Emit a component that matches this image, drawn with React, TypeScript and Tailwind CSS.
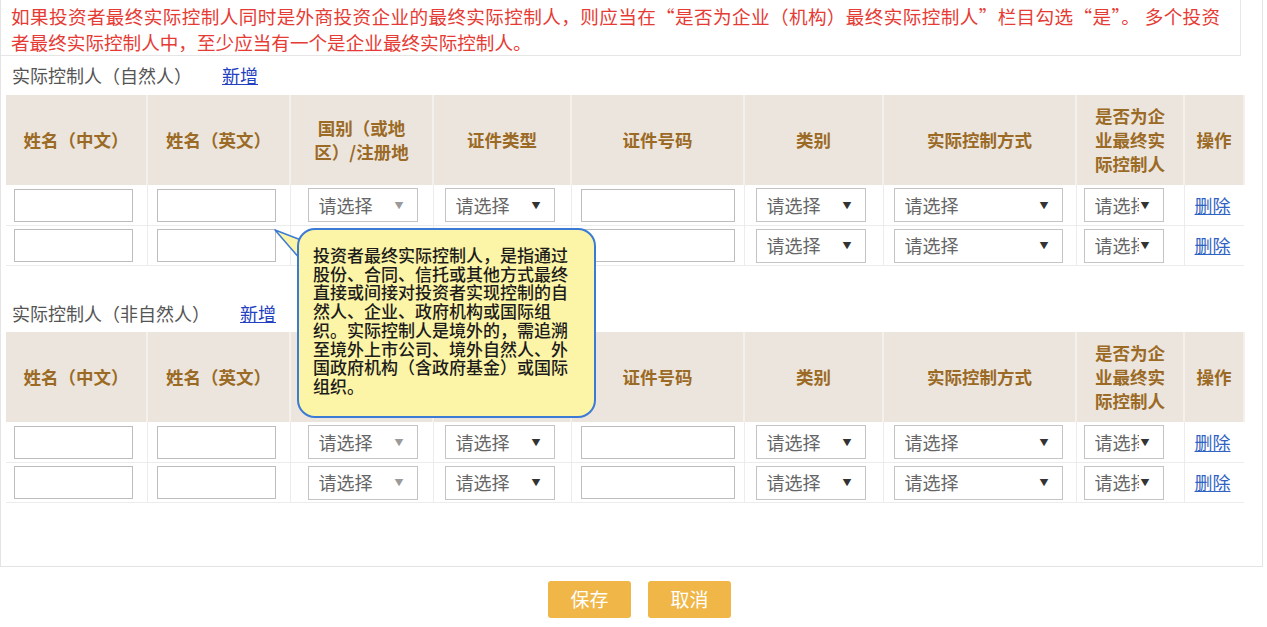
import React from "react";

const FONT = '"Noto Sans CJK SC", "Noto Sans", sans-serif';

function TextInput({ w, ml }: { w: number; ml: number }) {
  return (
    <div
      className="h-[33px] border border-[#bdbdbd] bg-white"
      style={{ width: w, marginLeft: ml }}
    />
  );
}

function Select({
  w,
  ml,
  light,
  clip,
}: {
  w: number;
  ml: number;
  light?: boolean;
  clip?: boolean;
}) {
  return (
    <div
      className="h-[34px] border border-[#c4c4c4] bg-white flex items-center pl-[10px] pr-[8px]"
      style={{ width: w, marginLeft: ml }}
    >
      <div
        className={
          "text-[18px] text-[#666] whitespace-nowrap overflow-hidden " +
          (clip ? "w-[44px] shrink-0" : "flex-1")
        }
      >
        请选择
      </div>
      <div
        className={
          "text-[9px] leading-none ml-auto " +
          (light ? "text-[#9a9a9a] mr-[5px]" : "text-[#333] mr-[5px]")
        }
      >
        ▼
      </div>
    </div>
  );
}

const COLS = [141, 143, 143, 138, 173, 139, 193, 108, 60];

function Header() {
  const th =
    "h-[90px] text-center align-middle font-bold text-[17.5px] leading-[24px] text-[#9b6a25] bg-[#ebe5de] border-r-2 border-[#f4f1ed] p-0";
  return (
    <tr>
      <th className={th}>姓名（中文）</th>
      <th className={th}>姓名（英文）</th>
      <th className={th}>
        国别（或地
        <br />
        区）/注册地
      </th>
      <th className={th}>证件类型</th>
      <th className={th}>证件号码</th>
      <th className={th}>类别</th>
      <th className={th}>实际控制方式</th>
      <th className={th}>
        是否为企
        <br />
        业最终实
        <br />
        际控制人
      </th>
      <th className={th + " border-r-0"}>操作</th>
    </tr>
  );
}

function Row({ h }: { h: number }) {
  const td = "p-0 border-b border-r border-[#ececec] align-middle";
  const inner = "flex items-center";
  return (
    <tr>
      <td className={td}>
        <div className={inner} style={{ height: h }}>
          <TextInput w={119} ml={8} />
        </div>
      </td>
      <td className={td}>
        <div className={inner} style={{ height: h }}>
          <TextInput w={119} ml={9} />
        </div>
      </td>
      <td className={td}>
        <div className={inner} style={{ height: h }}>
          <Select w={110} ml={17} light />
        </div>
      </td>
      <td className={td}>
        <div className={inner} style={{ height: h }}>
          <Select w={110} ml={11} />
        </div>
      </td>
      <td className={td}>
        <div className={inner} style={{ height: h }}>
          <TextInput w={154} ml={9} />
        </div>
      </td>
      <td className={td}>
        <div className={inner} style={{ height: h }}>
          <Select w={110} ml={11} />
        </div>
      </td>
      <td className={td}>
        <div className={inner} style={{ height: h }}>
          <Select w={169} ml={10} />
        </div>
      </td>
      <td className={td}>
        <div className={inner} style={{ height: h }}>
          <Select w={80} ml={7} clip />
        </div>
      </td>
      <td className={td + " border-r-0"}>
        <div className={inner} style={{ height: h }}>
          <a className="ml-[10px] text-[18px] text-[#2f62c2] underline cursor-pointer">
            删除
          </a>
        </div>
      </td>
    </tr>
  );
}

function Table() {
  return (
    <table className="ml-[5px] table-fixed border-collapse w-[1238px]">
      <colgroup>
        {COLS.map((c, i) => (
          <col key={i} style={{ width: c }} />
        ))}
      </colgroup>
      <thead>
        <Header />
      </thead>
      <tbody>
        <Row h={40} />
        <Row h={39} />
      </tbody>
    </table>
  );
}

export default function App() {
  return (
    <div className="w-[1267px] h-[627px] bg-white overflow-hidden" style={{ fontFamily: FONT }}>
      <div className="relative w-[1263px] h-[567px] border-r border-b border-l border-[#e4e4e4]">
        <div className="w-[1240px] h-[56px] border-r border-b border-[#e6e6e6] pl-[10px] pt-[3px] text-[18.6px] leading-[26px] text-[#e63b35] whitespace-nowrap">
          <div className="tracking-[0.38px]">
            如果投资者最终实际控制人同时是外商投资企业的最终实际控制人，则应当在“是否为企业（机构）最终实际控制人”栏目勾选“是”。 多个投资
          </div>
          <div>者最终实际控制人中，至少应当有一个是企业最终实际控制人。</div>
        </div>

        <div className="h-[39px] flex items-center pl-[11px] text-[18px] text-[#555]">
          <span>实际控制人（自然人）</span>
          <a className="ml-[30px] text-[#2340c0] underline cursor-pointer">新增</a>
        </div>
        <Table />

        <div className="mt-[28px] h-[38px] flex items-center pl-[11px] text-[18px] text-[#555]">
          <span>实际控制人（非自然人）</span>
          <a className="ml-[30px] text-[#2340c0] underline cursor-pointer">新增</a>
        </div>
        <Table />

        <svg
          className="absolute left-[268px] top-[224px]"
          width="34"
          height="44"
          viewBox="0 0 34 44"
        >
          <polygon
            points="6,6 32,16 32,36"
            fill="#fcf4a6"
            stroke="#3b7bd6"
            strokeWidth="1.5"
            strokeLinejoin="round"
          />
        </svg>
        <div className="absolute left-[296px] top-[228px] w-[299px] h-[190px] rounded-[18px] border-2 border-[#3b7bd6] bg-[#fcf4a6] pl-[14px] pt-[16px] text-[17px] leading-[18.7px] font-medium text-[#1c1c1c] whitespace-nowrap">
          投资者最终实际控制人，是指通过
          <br />
          股份、合同、信托或其他方式最终
          <br />
          直接或间接对投资者实现控制的自
          <br />
          然人、企业、政府机构或国际组
          <br />
          织。实际控制人是境外的，需追溯
          <br />
          至境外上市公司、境外自然人、外
          <br />
          国政府机构（含政府基金）或国际
          <br />
          组织。
        </div>
      </div>

      <div className="mt-[14px] flex justify-center gap-[17px] pl-[12px]">
        <button className="w-[83px] h-[37px] rounded-[3px] bg-[#f0b647] text-white text-[19px]">
          保存
        </button>
        <button className="w-[83px] h-[37px] rounded-[3px] bg-[#f0b647] text-white text-[19px]">
          取消
        </button>
      </div>
    </div>
  );
}
